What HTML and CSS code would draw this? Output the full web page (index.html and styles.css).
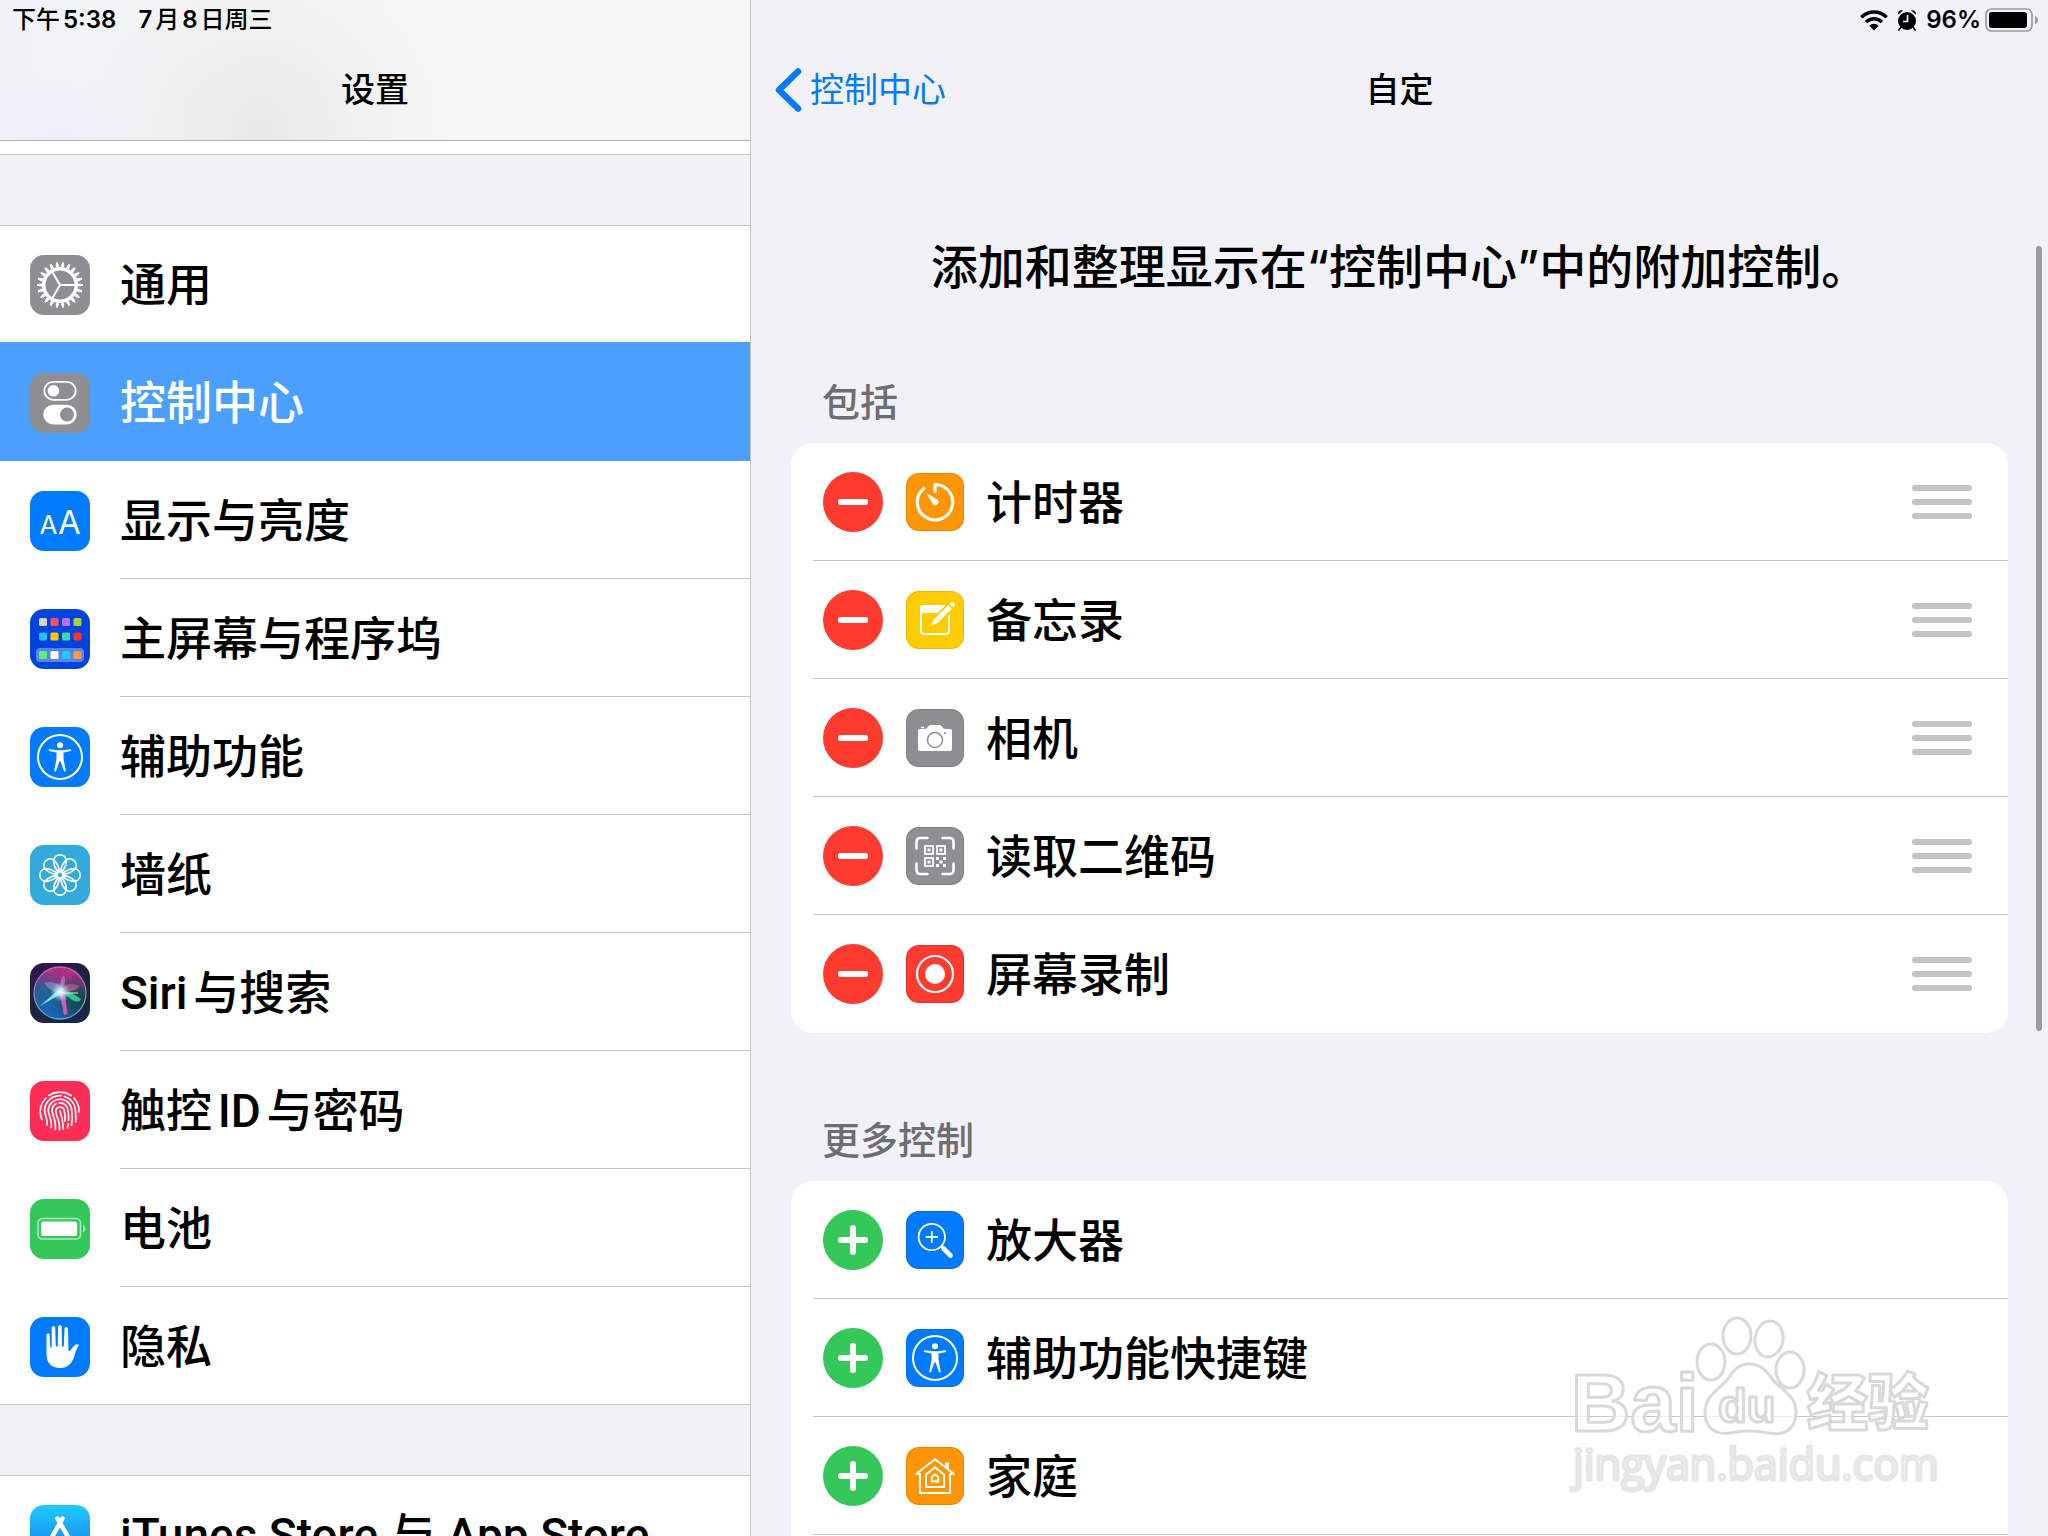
FILE: index.html
```html
<!DOCTYPE html>
<html lang="zh-CN">
<head>
    <meta charset="UTF-8">
    <meta name="viewport" content="width=device-width, initial-scale=1.0">
    <title>设置</title>
    <link rel="stylesheet" href="styles.css">
</head>
<body>
    <svg class="defs" aria-hidden="true">
        <symbol id="person" viewBox="0 0 60 60">
            <circle cx="30" cy="30" r="22" fill="none" stroke="#fff" stroke-width="2"/>
            <circle cx="30" cy="18.300" r="3" fill="#fff"/>
            <path d="M19.500 22.200 L27.500 23.300 H32.500 L40.500 22.200 Q42 22.800 40.800 24 L33.500 25.500 V32 L35.800 43.500 Q35.500 45 34 44.300 L30.600 34.500 H29.400 L26 44.300 Q24.500 45 24.200 43.500 L26.500 32 V25.500 L19.200 24 Q18 22.800 19.500 22.200 Z" fill="#fff"/>
        </symbol>
        <symbol id="petal" viewBox="0 0 60 60">
            <path d="M28.300 27.400 C23.600 21.500 23.800 19 23.800 16 C23.800 7.800 36.200 7.800 36.200 16 C36.200 19 36.400 21.500 31.700 27.400" fill="none" stroke="#fff" stroke-width="1.700"/>
        </symbol>
    </svg>

    <aside class="sidebar">
        <header class="sidebar-header">
            <div class="status"><span>下午<b>5:38</b></span><span><b>7</b>月<b>8</b>日周三</span></div>
            <h1 class="title">设置</h1>
        </header>
        <div class="list-end"></div>
        <nav class="menu">
            <a href="#" class="menu-item">
                <svg class="icon gray" viewBox="0 0 60 60">
                    <g fill="none" stroke="#fff">
                        <circle cx="30" cy="30" r="16.300" stroke-width="3.600"/>
                        <circle cx="30" cy="30" r="19.300" stroke-width="3" pathLength="220" stroke-dasharray="5.400 4.600" stroke-dashoffset="2.700"/>
                        <circle cx="30" cy="30" r="21.300" stroke-width="3.200" pathLength="220" stroke-dasharray="3.400 6.600" stroke-dashoffset="1.700"/>
                        <path d="M30 30 H46 M30 30 L22 16.200 M30 30 L22 43.800" stroke-width="2"/>
                    </g>
                </svg>
                <span class="label">通用</span>
            </a>
            <a href="#" class="menu-item active">
                <svg class="icon gray" viewBox="0 0 60 60">
                    <rect x="14.300" y="8.800" width="31.400" height="18" rx="9" fill="none" stroke="#fff" stroke-width="1.800"/>
                    <circle cx="23.400" cy="17.800" r="5.800" fill="#fff"/>
                    <rect x="13.300" y="31.700" width="33.400" height="19.800" rx="9.900" fill="#fff"/>
                    <circle cx="37" cy="41.600" r="7" fill="#8e8e93"/>
                </svg>
                <span class="label">控制中心</span>
            </a>
            <a href="#" class="menu-item">
                <svg class="icon blue" viewBox="0 0 60 60">
                    <text class="aa" x="18.500" y="42.500" font-size="26">A</text>
                    <text class="aa" x="39.500" y="42.500" font-size="33">A</text>
                </svg>
                <span class="label">显示与亮度</span>
            </a>
            <a href="#" class="menu-item">
                <svg class="icon navy" viewBox="0 0 60 60">
                    <rect x="6" y="39" width="48" height="14" rx="4" fill="#fff" opacity=".35"/>
                    <rect x="9" y="9" width="8" height="8" rx="1.500" fill="#d8d4cc"/>
                    <rect x="20.500" y="9" width="8" height="8" rx="1.500" fill="#ff4f64"/>
                    <rect x="32" y="9" width="8" height="8" rx="1.500" fill="#bf6cff"/>
                    <rect x="43.500" y="9" width="8" height="8" rx="1.500" fill="#b0d136"/>
                    <rect x="9" y="23.500" width="8" height="8" rx="1.500" fill="#1cc1f5"/>
                    <rect x="20.500" y="23.500" width="8" height="8" rx="1.500" fill="#ffc700"/>
                    <rect x="32" y="23.500" width="8" height="8" rx="1.500" fill="#3fd7a5"/>
                    <rect x="43.500" y="23.500" width="8" height="8" rx="1.500" fill="#ff3328"/>
                    <rect x="9" y="42" width="8" height="8" rx="1.500" fill="#5ef07a"/>
                    <rect x="20.500" y="42" width="8" height="8" rx="1.500" fill="#fff"/>
                    <rect x="32" y="42" width="8" height="8" rx="1.500" fill="#1acfff"/>
                    <rect x="43.500" y="42" width="8" height="8" rx="1.500" fill="#ff9b45"/>
                </svg>
                <span class="label">主屏幕与程序坞</span>
            </a>
            <a href="#" class="menu-item">
                <svg class="icon blue" viewBox="0 0 60 60"><use href="#person"/></svg>
                <span class="label">辅助功能</span>
            </a>
            <a href="#" class="menu-item">
                <svg class="icon sky" viewBox="0 0 60 60">
                    <use href="#petal"/>
                    <use href="#petal" transform="rotate(45 30 30)"/>
                    <use href="#petal" transform="rotate(90 30 30)"/>
                    <use href="#petal" transform="rotate(135 30 30)"/>
                    <use href="#petal" transform="rotate(180 30 30)"/>
                    <use href="#petal" transform="rotate(225 30 30)"/>
                    <use href="#petal" transform="rotate(270 30 30)"/>
                    <use href="#petal" transform="rotate(315 30 30)"/>
                    <circle cx="30" cy="30" r="3" fill="none" stroke="#fff" stroke-width="1.500"/>
                </svg>
                <span class="label">墙纸</span>
            </a>
            <a href="#" class="menu-item">
                <svg class="icon siri" viewBox="0 0 60 60">
                    <defs>
                        <linearGradient id="orb" x1=".6" y1="0" x2=".35" y2="1">
                            <stop offset="0" stop-color="#c42a7c"/>
                            <stop offset=".3" stop-color="#7a3c86"/>
                            <stop offset=".5" stop-color="#23628f"/>
                            <stop offset="1" stop-color="#1763c0"/>
                        </linearGradient>
                        <linearGradient id="ring" x1="0" y1="0" x2="0" y2="1">
                            <stop offset="0" stop-color="#b06ab4"/>
                            <stop offset="1" stop-color="#6fa3b8"/>
                        </linearGradient>
                        <radialGradient id="side" cx=".9" cy=".65" r=".55">
                            <stop offset="0" stop-color="#124244"/>
                            <stop offset="1" stop-color="#124244" stop-opacity="0"/>
                        </radialGradient>
                        <radialGradient id="glow">
                            <stop offset="0" stop-color="#fff"/>
                            <stop offset=".3" stop-color="#e4fbff" stop-opacity=".8"/>
                            <stop offset="1" stop-color="#8fd8ff" stop-opacity="0"/>
                        </radialGradient>
                    </defs>
                    <circle cx="30" cy="30" r="26" fill="url(#orb)"/>
                    <circle cx="30" cy="30" r="26" fill="url(#side)"/>
                    <path d="M14 20 Q29 16 36 30 Q22 32 14 20 Z" fill="#9fb6e8" opacity=".45"/>
                    <path d="M31 29 Q34 17 50 23 Q42 31 31 29 Z" fill="#f06a9c" opacity=".5"/>
                    <path d="M31 28 Q29 16 34 12 Q37 20 31 28 Z" fill="#f4a0d0" opacity=".45"/>
                    <path d="M10 43 L28 27 L33 30 Q22 36 10 43 Z" fill="#7ff4ec" opacity=".9"/>
                    <path d="M29 29 L35 30 Q36 42 37.500 51 Q33 54 33 46 Z" fill="#f05db8" opacity=".85"/>
                    <path d="M30 27 Q42 29 51 36 Q49 41 42 37 Z" fill="#40e8a8" opacity=".75"/>
                    <path d="M31 30 H48" stroke="#c8ffe8" stroke-width="1"/>
                    <circle cx="30.500" cy="29" r="10" fill="url(#glow)"/>
                    <circle cx="30" cy="30" r="26" fill="none" stroke="url(#ring)" stroke-width="1.300"/>
                </svg>
                <span class="label">Siri与搜索</span>
            </a>
            <a href="#" class="menu-item">
                <svg class="icon pink" viewBox="0 0 60 60">
                    <g fill="none" stroke="#fff" stroke-width="1.700" stroke-linecap="round">
                        <path d="M19 14.500 A20 20 0 0 1 41 14.500"/>
                        <path d="M16 17 A20 20 0 0 0 11 36 Q11.500 37.500 12 38.500"/>
                        <path d="M44 17 A20 20 0 0 1 49 31"/>
                        <path d="M17 44 C18 37 14 33 14.600 28 A15.500 15.500 0 0 1 31 14.700"/>
                        <path d="M34.500 15.500 A15.500 15.500 0 0 1 45.500 29 Q46 36 45.800 41"/>
                        <path d="M21.200 46.500 C22.500 38 17.500 33 18.300 28.500 A11.800 11.800 0 0 1 41.800 30 Q42.500 38 41.500 44.500"/>
                        <path d="M25.300 48.500 C26.500 38 21.500 33 22 29 A8 8 0 0 1 26 22.800"/>
                        <path d="M29 22 A8 8 0 0 1 38 30 Q39 35 38.500 39.500"/>
                        <path d="M29.500 49 C30.500 40 25.200 33.500 25.800 29.500 A4.300 4.300 0 0 1 34.300 30 Q35.500 35 35 40"/>
                        <path d="M30 30 Q33 38 33.300 48"/>
                        <path d="M38.300 43 L37.500 47"/>
                    </g>
                </svg>
                <span class="label">触控ID与密码</span>
            </a>
            <a href="#" class="menu-item">
                <svg class="icon green" viewBox="0 0 60 60">
                    <rect x="8" y="19.500" width="42.500" height="20.500" rx="4.500" fill="none" stroke="#fff" stroke-width="1.600" opacity=".6"/>
                    <rect x="11.200" y="22.500" width="36" height="14.500" rx="2" fill="#fff"/>
                    <path d="M53 26 Q55.500 27 55.500 29.800 Q55.500 32.500 53 33.500 Z" fill="#fff" opacity=".6"/>
                </svg>
                <span class="label">电池</span>
            </a>
            <a href="#" class="menu-item">
                <svg class="icon blue" viewBox="0 0 60 60">
                    <path d="M16.500 18 Q16.700 16.300 18.200 16.300 Q19.600 16.300 19.700 18 L20.300 30.500 H21.700 V10.500 Q21.900 9 23.500 9 Q25 9 25.200 10.500 L25.800 29.500 H27.800 L28.100 9.500 Q28.300 8 30 8 Q31.500 8 31.700 9.500 L32 29.500 H33.800 L34.500 11.500 Q34.700 10 36.300 10 Q37.900 10.200 38 12 L38.500 34 Q40 34.500 41 32.500 Q44.500 27 48.300 27.200 Q49.500 27.800 48.500 29 Q46.300 31.500 45 37 Q41.500 51 30 51 Q16.500 51 16.500 36 Z" fill="#fff"/>
                </svg>
                <span class="label">隐私</span>
            </a>
        </nav>
        <nav class="menu store">
            <a href="#" class="menu-item">
                <svg class="icon appstore" viewBox="0 0 60 60">
                    <path d="M32.500 13.500 L18 39 M27.500 13.500 L42 39 M13 34.500 H32 M40 34.500 H47" fill="none" stroke="#fff" stroke-width="4.500" stroke-linecap="round"/>
                </svg>
                <span class="label">iTunes Store 与 App Store</span>
            </a>
        </nav>
    </aside>

    <main class="detail">
        <div class="status status-right">
            <svg width="28" height="22" viewBox="0 0 28 22" aria-label="Wi-Fi">
                <g fill="none" stroke="#000" stroke-width="3.600">
                    <path d="M1.300 8.300 A18 18 0 0 1 26.700 8.300"/>
                    <path d="M6 13 A11.300 11.300 0 0 1 22 13"/>
                </g>
                <path d="M14 21.500 L9.300 16.800 A6.600 6.600 0 0 1 18.700 16.800 Z"/>
            </svg>
            <svg class="alarm" width="20" height="22" viewBox="0 0 20 22" aria-label="闹钟">
                <circle cx="10" cy="12" r="9"/>
                <path d="M1 4.500 Q2 0.500 6 1.500 L1.300 5.500 Z M19 4.500 Q18 0.500 14 1.500 L18.700 5.500 Z"/>
                <path d="M4 18 L1.500 21.500 M16 18 L18.500 21.500" stroke="#000" stroke-width="1.600"/>
                <path d="M10.500 6 V12.500 H6" fill="none" stroke="#f2f1f7" stroke-width="1.700"/>
            </svg>
            <b>96%</b>
            <svg width="54" height="24" viewBox="0 0 54 24" aria-label="电量">
                <rect x="1" y="1" width="46" height="22" rx="5.500" fill="none" stroke="#9b9b9e" stroke-width="1.700"/>
                <rect x="4" y="4" width="38" height="16" rx="3"/>
                <path d="M50 8 Q53 9 53 12 Q53 15 50 16 Z" fill="#9b9b9e"/>
            </svg>
        </div>
        <header class="detail-header">
            <a href="#" class="back">
                <svg width="28" height="46" viewBox="0 0 28 46" aria-hidden="true">
                    <path d="M23 4.500 L4 23 L23 41.500" fill="none" stroke="#007aff" stroke-width="6.500" stroke-linecap="round" stroke-linejoin="round"/>
                </svg>
                <span>控制中心</span>
            </a>
            <h2 class="title">自定</h2>
        </header>
        <p class="intro">添加和整理显示在“控制中心”中的附加控制。</p>

        <h3 class="group-title">包括</h3>
        <ul class="card">
            <li class="row">
                <button class="toggle remove" aria-label="移除计时器"></button>
                <svg class="icon-sm orange" viewBox="0 0 58 58">
                    <path d="M17.800 15.500 A17.700 17.700 0 1 0 29 11.500 V18.500" fill="none" stroke="#fff" stroke-width="3.200" stroke-linecap="round" stroke-linejoin="round"/>
                    <path d="M20.300 20 L31.500 26.800 A3 3 0 0 1 27 31.300 Z" fill="#fff"/>
                </svg>
                <span class="label">计时器</span>
                <button class="handle" aria-label="排序"><i></i><i></i><i></i></button>
            </li>
            <li class="row">
                <button class="toggle remove" aria-label="移除备忘录"></button>
                <svg class="icon-sm yellow" viewBox="0 0 58 58">
                    <path d="M17 15 H41 Q43 15 43 17 V40 Q43 43 40 43 H18 Q15 43 15 40 V17 Q15 15 17 15 Z" fill="none" stroke="#fff" stroke-width="2"/>
                    <path d="M15 15 H43 V22 H15 Z" fill="#fff"/>
                    <path d="M28 32.500 L46 14.500" stroke="#ffcc00" stroke-width="9.500"/>
                    <path d="M25 35 L28 28.300 L42.500 14 L46 17.500 L31.500 32 Z" fill="#fff"/>
                    <path d="M43.700 12.800 L45 11.500 Q46.500 10.300 48.200 12 Q49.700 13.700 48.500 15 L47.200 16.300 Z" fill="#fff"/>
                </svg>
                <span class="label">备忘录</span>
                <button class="handle" aria-label="排序"><i></i><i></i><i></i></button>
            </li>
            <li class="row">
                <button class="toggle remove" aria-label="移除相机"></button>
                <svg class="icon-sm gray" viewBox="0 0 58 58">
                    <path d="M14 20 H19 Q21 19.500 22 17.500 Q23 16 24.500 16 H33.500 Q35 16 36 17.500 Q37 19.500 39 20 H44 Q46 20 46 22 V40 Q46 42 44 42 H14 Q12 42 12 40 V22 Q12 20 14 20 Z" fill="#fff"/>
                    <rect x="15" y="17.700" width="3.200" height="1.500" fill="#fff"/>
                    <circle cx="29" cy="31" r="7.500" fill="none" stroke="#8e8e93" stroke-width="1.500"/>
                    <circle cx="39" cy="24" r="1" fill="#8e8e93"/>
                </svg>
                <span class="label">相机</span>
                <button class="handle" aria-label="排序"><i></i><i></i><i></i></button>
            </li>
            <li class="row">
                <button class="toggle remove" aria-label="移除读取二维码"></button>
                <svg class="icon-sm gray" viewBox="0 0 58 58">
                    <path d="M10.500 21.500 V15 Q10.500 11 14.500 11 H21.500 M36.500 11 H43.500 Q47.500 11 47.500 15 V21.500 M47.500 36.500 V43 Q47.500 47 43.500 47 H36.500 M21.500 47 H14.500 Q10.500 47 10.500 43 V36.500" fill="none" stroke="#fff" stroke-width="2.500" stroke-linecap="round"/>
                    <g fill="none" stroke="#fff" stroke-width="1.800">
                        <rect x="19" y="19" width="8" height="8"/>
                        <rect x="31" y="19" width="8" height="8"/>
                        <rect x="19" y="31" width="8" height="8"/>
                    </g>
                    <path d="M21.500 21.500 h3 v3 h-3 Z M33.500 21.500 h3 v3 h-3 Z M21.500 33.500 h3 v3 h-3 Z M30 30 h3 v3 h-3 Z M37 30 h3 v3 h-3 Z M33.500 33.500 h3 v3 h-3 Z M30 37 h3 v3 h-3 Z M37 37 h3 v3 h-3 Z" fill="#fff"/>
                </svg>
                <span class="label">读取二维码</span>
                <button class="handle" aria-label="排序"><i></i><i></i><i></i></button>
            </li>
            <li class="row">
                <button class="toggle remove" aria-label="移除屏幕录制"></button>
                <svg class="icon-sm red" viewBox="0 0 58 58">
                    <circle cx="29" cy="29" r="18" fill="none" stroke="#fff" stroke-width="2.200"/>
                    <circle cx="29" cy="29" r="10" fill="#fff"/>
                </svg>
                <span class="label">屏幕录制</span>
                <button class="handle" aria-label="排序"><i></i><i></i><i></i></button>
            </li>
        </ul>

        <h3 class="group-title">更多控制</h3>
        <ul class="card">
            <li class="row">
                <button class="toggle add" aria-label="添加放大器"></button>
                <svg class="icon-sm blue" viewBox="0 0 58 58">
                    <g fill="none" stroke="#fff" stroke-width="1.800">
                        <circle cx="25.800" cy="26" r="13.200"/>
                        <path d="M25.800 20 V32 M19.800 26 H31.800"/>
                        <path d="M35.500 35.500 L38 38"/>
                        <path d="M37.500 37.500 L44.500 44.500" stroke-width="4.600" stroke-linecap="round"/>
                    </g>
                </svg>
                <span class="label">放大器</span>
            </li>
            <li class="row">
                <button class="toggle add" aria-label="添加辅助功能快捷键"></button>
                <svg class="icon-sm blue" viewBox="1 1 58 58"><use href="#person" width="60" height="60"/></svg>
                <span class="label">辅助功能快捷键</span>
            </li>
            <li class="row">
                <button class="toggle add" aria-label="添加家庭"></button>
                <svg class="icon-sm orange" viewBox="0 0 58 58">
                    <g fill="none" stroke="#fff" stroke-width="2" stroke-linejoin="round">
                        <path d="M14 27 H10 L29 12.200 L48 27 H44 V46 H14 Z"/>
                        <path d="M20 40 V27.500 L29 20.300 L38 27.500 V40 Z"/>
                        <path d="M25.800 34.500 V30 L29 27.300 L32.200 30 V34.500 Z"/>
                    </g>
                    <path d="M39 15.500 H43 V23.500 L39 20.500 Z" fill="#fff"/>
                </svg>
                <span class="label">家庭</span>
            </li>
            <li class="row">
                <button class="toggle add" aria-label="添加"></button>
            </li>
        </ul>
        <div class="scrollbar"></div>
    </main>

    <svg class="watermark" width="420" height="246" viewBox="0 0 420 246" aria-hidden="true">
        <g class="mark">
            <text class="mark-latin" x="31" y="141">Bai</text>
            <ellipse cx="171" cy="72" rx="14" ry="18"/>
            <ellipse cx="197" cy="46" rx="14" ry="18"/>
            <ellipse cx="229" cy="49" rx="14" ry="18" transform="rotate(10 229 49)"/>
            <ellipse cx="250" cy="80" rx="14" ry="18"/>
            <path d="M209 74 C222 74 227 82 233 90 C242 101 257 105 256 124 C255 140 243 146 229 143 C214 140 204 140 190 143 C173 146 164 134 165 121 C166 106 177 101 187 90 C193 82 197 74 209 74 Z"/>
            <text class="mark-du" x="178" y="132">du</text>
            <text class="mark-cjk" x="267" y="135">经验</text>
            <text class="mark-url" x="33" y="190">jingyan.baidu.com</text>
        </g>
    </svg>
</body>
</html>
```
FILE: styles.css
```css
* {
    box-sizing: border-box;
}

body {
    display: flex;
    height: 100vh;
    margin: 0;
    overflow: hidden;
    position: relative;
    background-color: #f2f1f7;
    color: #000;
    font-family: Inter, "Noto Sans CJK SC", sans-serif;
    font-size: 46px;
    font-weight: 500;
    text-autospace: normal;
}

a {
    color: inherit;
    text-decoration: none;
}

button {
    border: none;
    padding: 0;
    background: none;
    cursor: pointer;
}

.defs {
    display: none;
}

/* Status bar */
.status {
    display: flex;
    align-items: center;
    gap: 22px;
    height: 40px;
    padding: 0 12px;
    font-size: 24px;
    line-height: 40px;
}

.status b {
    font-weight: 600;
}

.status-right {
    justify-content: flex-end;
    gap: 4px;
    padding: 0 9px;
}

.alarm {
    margin: 0 5px;
}

.title {
    margin: 0;
    font-size: 34px;
    font-weight: 500;
    line-height: 100px;
    text-align: center;
}

/* Left column */
.sidebar {
    display: flex;
    flex-direction: column;
    flex: 0 0 751px;
    border-right: 1px solid #c6c6c8;
}

.sidebar-header {
    flex: none;
    height: 141px;
    border-bottom: 1px solid #b2b2b4;
    background: radial-gradient(circle at 60px 150px, #eeecfb 0, rgba(240, 239, 250, 0) 80px), radial-gradient(circle at 260px 130px, #e9e9e9 0, rgba(240, 240, 240, 0) 190px), linear-gradient(90deg, #f1f2f8 0, #f7f7f7 240px);
}

.list-end {
    flex: none;
    height: 14px;
    border-bottom: 1px solid #c6c6c8;
    background-color: #fff;
}

.menu {
    flex: none;
    margin-top: 70px;
    border-bottom: 1px solid #c6c6c8;
    background: linear-gradient(#c6c6c8, #c6c6c8) top / 100% 1px no-repeat #fff;
}

.menu-item {
    display: flex;
    align-items: center;
    height: 118px;
    padding: 2px 0 0 30px;
}

.menu-item:last-child {
    height: 117px;
}

.icon {
    flex: none;
    width: 60px;
    height: 60px;
    margin-right: 30px;
    border-radius: 14px;
}

.label {
    flex: 1;
    font-family: Roboto, "Noto Sans CJK SC", sans-serif;
    line-height: 60px;
    white-space: nowrap;
}

.menu-item .label {
    padding: 28px 0 27px;
    border-bottom: 1px solid #c6c6c8;
}

.menu-item:first-child .label,
.menu-item:last-child .label {
    border-color: transparent;
}

.menu-item.active {
    height: 119px;
    margin-top: -1px;
    background-color: #4ba0ff;
    color: #fff;
}

.menu-item.active .label {
    border-color: transparent;
}

.aa {
    fill: #fff;
    font-weight: 400;
    text-anchor: middle;
}

.gray { background-color: #8e8e93; }
.blue { background-color: #007aff; }
.navy { background-color: #0044dd; }
.sky { background-color: #34aadc; }
.pink { background-color: #ff2d55; }
.green { background-color: #34c759; }
.orange { background-color: #ff9500; }
.yellow { background-color: #ffcc00; }
.red { background-color: #ff3b30; }
.siri { background: linear-gradient(160deg, #3a1256, #1a2440 50%, #14284c); }
.appstore { background: linear-gradient(#1dcbfc, #1a6ff0); }

/* Right column */
.detail {
    flex: 1;
    min-width: 0;
    position: relative;
}

.detail-header {
    display: grid;
    grid-template-columns: 1fr auto 1fr;
    align-items: center;
    height: 100px;
    padding: 0 24px;
}

.back {
    display: flex;
    align-items: center;
    gap: 7px;
    color: #007aff;
    font-size: 34px;
    font-weight: 400;
    line-height: 46px;
}

.intro {
    margin: 92px 0 0;
    font-size: 47px;
    line-height: 70px;
    text-align: center;
}

.group-title {
    margin: 0 71px;
    padding-top: 77px;
    color: #6d6d72;
    font-size: 38px;
    font-weight: 500;
    line-height: 60px;
}

.intro + .group-title {
    padding-top: 70px;
}

.card {
    margin: 11px 40px 0;
    padding: 0;
    border-radius: 22px;
    background-color: #fff;
    list-style: none;
}

.row {
    display: flex;
    align-items: center;
    height: 118px;
    padding: 0 36px 0 32px;
    background: linear-gradient(#c6c6c8, #c6c6c8) 22px 100% / 100% 1px no-repeat;
}

.row:last-child {
    background: none;
}

.row .label {
    padding-top: 2px;
}

.toggle {
    display: grid;
    place-items: center;
    flex: none;
    width: 60px;
    height: 60px;
    margin-right: 23px;
    border-radius: 50%;
}

.toggle::before,
.toggle::after {
    content: "";
    grid-area: 1 / 1;
    width: 30px;
    height: 6px;
    border-radius: 3px;
    background-color: #fff;
}

.remove {
    background-color: #ff3b30;
}

.add {
    background-color: #34c759;
}

.add::after {
    width: 6px;
    height: 30px;
}

.icon-sm {
    flex: none;
    width: 58px;
    height: 58px;
    margin-right: 22px;
    border-radius: 13px;
    box-shadow: inset 0 0 0 1px rgba(0, 0, 0, 0.1);
}

.handle {
    display: flex;
    flex-direction: column;
    gap: 8px;
    width: 60px;
}

.handle i {
    height: 6px;
    border-radius: 3px;
    background-color: #c4c4c6;
}

.scrollbar {
    position: absolute;
    top: 246px;
    right: 6px;
    width: 6px;
    height: 785px;
    border-radius: 3px;
    background-color: #9b9b9e;
}

/* Watermark over the page corner */
.watermark {
    position: absolute;
    right: 88px;
    bottom: 0;
    pointer-events: none;
}

.mark {
    fill: rgba(255, 255, 255, 0.7);
    stroke: #d9d9d9;
    stroke-width: 3px;
    stroke-linejoin: round;
}

.mark-latin {
    font: bold 82px "Liberation Sans", sans-serif;
}

.mark-du {
    font: bold 47px "Liberation Sans", sans-serif;
}

.mark-cjk {
    font: 900 61px "Noto Sans CJK SC", sans-serif;
}

.mark-url {
    font: 43px "Open Sans", sans-serif;
    stroke: #e6e6e6;
}
```
